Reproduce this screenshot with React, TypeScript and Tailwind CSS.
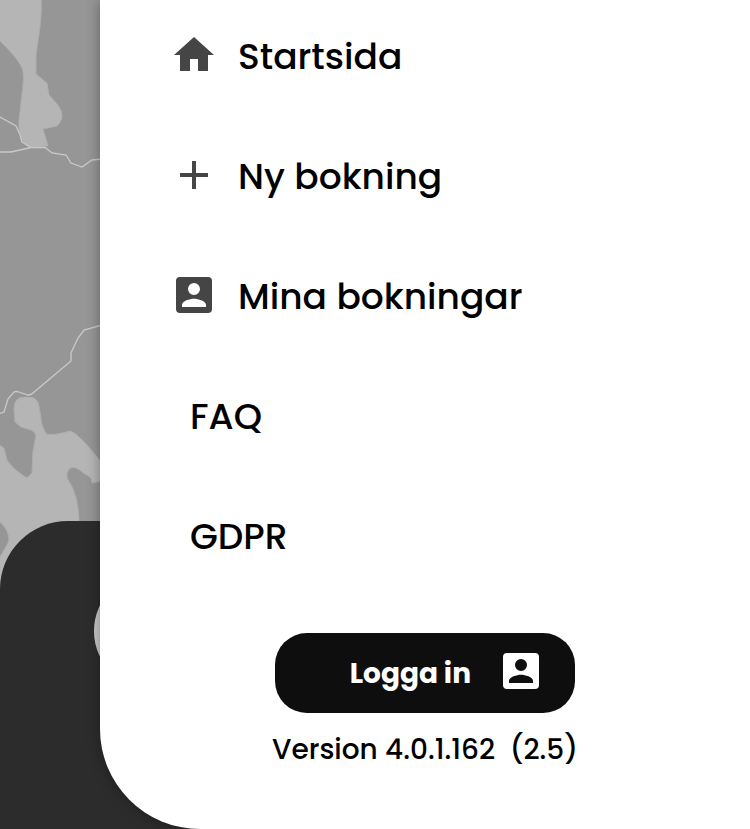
import type { ReactNode } from "react";

type MenuItem = {
    label: string;
    href: string;
    icon?: ReactNode;
};

function HomeIcon() {
    return (
        <svg viewBox="0 0 48 48" className="mb-1 size-12 shrink-0 fill-[#454545]" aria-hidden="true">
            <path d="M20 40V28h8v12h10V24h6L24 6 4 24h6v16z" />
        </svg>
    );
}

function PlusIcon() {
    return (
        <svg viewBox="0 0 48 48" className="mb-1 size-12 shrink-0 fill-[#454545]" aria-hidden="true">
            <path d="M38 26H26v12h-4V26H10v-4h12V10h4v12h12z" />
        </svg>
    );
}

function AccountIcon({ className }: { className: string }) {
    return (
        <svg viewBox="0 0 48 48" className={className} aria-hidden="true">
            <path d="M10 6a4 4 0 0 0-4 4v28a4 4 0 0 0 4 4h28a4 4 0 0 0 4-4V10a4 4 0 0 0-4-4H10zm20 12a6 6 0 1 1-12 0 6 6 0 0 1 12 0zM12 34c0-4 8-6.200 12-6.200S36 30 36 34v2H12v-2z" />
        </svg>
    );
}

const menuItems: MenuItem[] = [
    { label: "Startsida", href: "#start", icon: <HomeIcon /> },
    { label: "Ny bokning", href: "#ny-bokning", icon: <PlusIcon /> },
    {
        label: "Mina bokningar",
        href: "#bokningar",
        icon: <AccountIcon className="mb-1 size-12 shrink-0 fill-[#454545]" />,
    },
    { label: "FAQ", href: "#faq" },
    { label: "GDPR", href: "#gdpr" },
];

function MapBackdrop() {
    return (
        <svg viewBox="0 0 120 600" className="h-[600px] w-[120px]" aria-hidden="true">
            {/* water */}
            <g fill="#b5b5b5" stroke="#adadad">
                <path d="M-2 -2H41Q42 10 40 27L36 55V74L47 83L49 95L58 105Q63 112 62 117Q61 123 57 126L43 129L48 146L32 147Q24 145 21 138Q18 131 19 120L23 85Q24 73 22 68C18 59 8 49-2 39z" />
                <path d="M-2 444L4 448L7 460Q13 469 21 474L27 478L32 473L33 451L36 435Q35 432 31 430L21 427L15 422L14 409Q14 401 19 398Q26 396 34 398Q38 400 39 406L42 425L46 434Q53 436 70 431Q74 432 78 436C86 443 94 453 102 463V481L92 483L91 478L82 472Q76 466 70 468Q66 472 67 478C75 490 79 503 79 525V600H-2V560Q2 554 8 543Q11 537 4 526L-2 520z" />
            </g>
            {/* borders */}
            <g fill="none" stroke="#c9c9c9" strokeWidth="1.300">
                <path d="M-2 116L16 126L20 135L22 142L31 147.500H45L52 153L66 155L71 163L82 167L92 160L102 159" />
                <path d="M-2 152H11L31 147.500" />
                <path d="M-2 414L4 412L8 399L14 392Q16 391 19 392L28 395Q31 395 33 393L71 361V353L78 338L84 330L102 325" />
            </g>
        </svg>
    );
}

export default function App() {
    return (
        <div className="grid min-h-screen overflow-hidden bg-[#969696] font-['Poppins','Inter',sans-serif] text-black">
            <div className="relative col-start-1 row-start-1 overflow-hidden">
                <MapBackdrop />
                <div className="absolute inset-x-0 bottom-0 h-[308px] overflow-hidden rounded-t-[68px] bg-[#2c2c2c]">
                    <div className="absolute top-[51px] left-[94px] size-[118px] rounded-full bg-[#c8c8c8]" />
                </div>
            </div>

            <aside className="relative col-start-1 row-start-1 ml-[100px] rounded-bl-[100px] bg-white pt-[21px] pb-14 shadow-[0_0_14px_rgba(0,0,0,0.35)]">
                <nav>
                    <ul className="flex flex-col gap-12">
                        {menuItems.map((item) => (
                            <li key={item.label}>
                                <a
                                    href={item.href}
                                    className={
                                        item.icon
                                            ? "flex h-[72px] items-center gap-5 pl-[70px] text-[36px] leading-[48px] font-medium"
                                            : "flex h-[72px] items-center pl-[90px] text-[36px] leading-[48px] font-medium"
                                    }
                                >
                                    {item.icon}
                                    {item.label}
                                </a>
                            </li>
                        ))}
                    </ul>
                </nav>

                <div className="mt-[60px] flex flex-col items-center gap-[17px]">
                    <button
                        type="button"
                        className="flex h-20 w-[300px] items-center justify-end gap-[26px] rounded-[32px] bg-[#0e0e0e] pt-0.5 pr-[30px] text-[28px] leading-10 font-bold text-white"
                    >
                        Logga in
                        <AccountIcon className="mb-1.5 size-12 shrink-0 fill-white" />
                    </button>
                    <p className="text-[28px] leading-10 font-medium whitespace-pre">Version 4.0.1.162  (2.5)</p>
                </div>
            </aside>
        </div>
    );
}
